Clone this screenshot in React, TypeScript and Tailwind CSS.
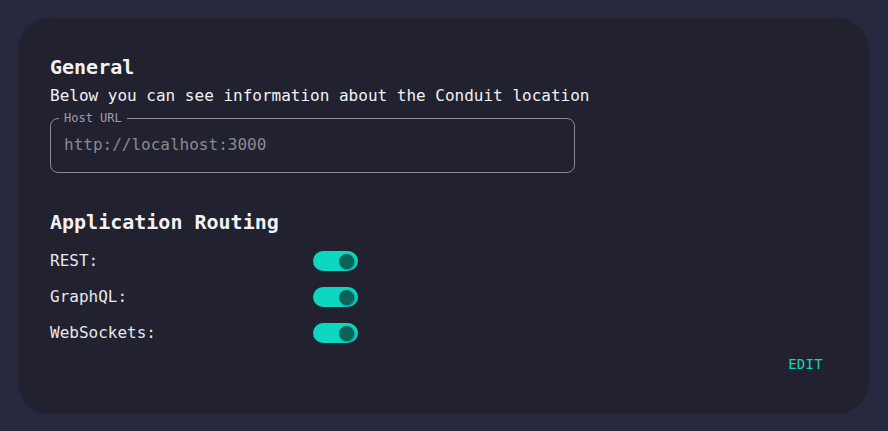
import { useState } from "react";

type Route = {
  label: string;
  enabled: boolean;
};

const initialRoutes: Route[] = [
  { label: "REST:", enabled: true },
  { label: "GraphQL:", enabled: true },
  { label: "WebSockets:", enabled: true },
];

function Toggle({ on, onClick }: { on: boolean; onClick: () => void }) {
  return (
    <button
      onClick={onClick}
      className={`relative w-[45px] h-[20px] rounded-full flex items-center ${
        on ? "bg-[#0dd6c1] justify-end" : "bg-[#55576a] justify-start"
      }`}
    >
      <span
        className={`w-[15px] h-[15px] rounded-full mx-[4px] shadow-[1px_1px_2px_rgba(0,0,0,0.35)] ${
          on ? "bg-[#0b6357]" : "bg-[#c8c8d0]"
        }`}
      />
    </button>
  );
}

export default function App() {
  const [routes, setRoutes] = useState(initialRoutes);

  const flip = (i: number) =>
    setRoutes(routes.map((r, j) => (j === i ? { ...r, enabled: !r.enabled } : r)));

  return (
    <div
      className="w-full h-[431px] bg-[#262840] pt-[18px] pl-[18px]"
      style={{ fontFamily: '"DejaVu Sans Mono", "Liberation Mono", monospace' }}
    >
      <div className="w-[851px] h-[396px] bg-[#222130] rounded-[32px] px-[32px] pt-[35px] text-[#f2f2f4]">
        <h2 className="text-[20px] leading-[28px] font-semibold">General</h2>
        <p className="mt-[3px] text-[16px] leading-[24px]">
          Below you can see information about the Conduit location
        </p>

        <div className="relative mt-[10px] w-[525px] h-[55px] border border-[#8b8b92] rounded-[8px] flex items-center pl-[13px]">
          <span className="absolute -top-[8px] left-[8px] px-[5px] bg-[#222130] text-[12px] leading-[14px] text-[#9d9da6]">
            Host URL
          </span>
          <span className="text-[16px] leading-[24px] text-[#8a8a93] mt-[-2px]">
            http://localhost:3000
          </span>
        </div>

        <h2 className="mt-[35px] text-[20px] leading-[28px] font-semibold">
          Application Routing
        </h2>

        <div className="mt-[7px] flex flex-col">
          {routes.map((r, i) => (
            <div key={r.label} className="h-[36px] flex items-center">
              <span className="w-[263px] text-[16px] leading-[24px] text-[#e8e8ec]">
                {r.label}
              </span>
              <Toggle on={r.enabled} onClick={() => flip(i)} />
            </div>
          ))}
        </div>

        <div className="mt-[1px] flex justify-end pr-[14px]">
          <button className="text-[14px] leading-[24px] text-[#12d3bd] tracking-[0.02em]">
            EDIT
          </button>
        </div>
      </div>
    </div>
  );
}
